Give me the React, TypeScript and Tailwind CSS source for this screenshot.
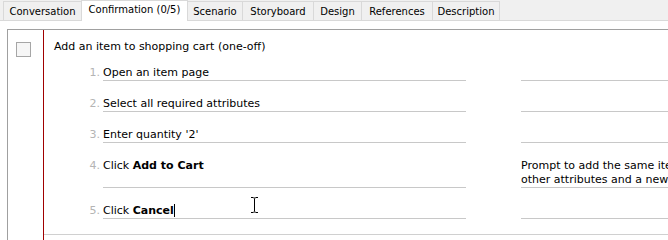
import clsx from "clsx";

const tabs = [
  { label: "Conversation", w: "w-[79px]" },
  { label: "Confirmation (0/5)", w: "w-[107px]", active: true },
  { label: "Scenario", w: "w-[56px]" },
  { label: "Storyboard", w: "w-[72px]" },
  { label: "Design", w: "w-[49px]" },
  { label: "References", w: "w-[72px]" },
  { label: "Description", w: "w-[68px]" },
];

type Step = {
  n: number;
  text: React.ReactNode;
  note?: React.ReactNode;
};

const steps: Step[] = [
  { n: 1, text: "Open an item page" },
  { n: 2, text: "Select all required attributes" },
  { n: 3, text: "Enter quantity '2'" },
  {
    n: 4,
    text: (
      <>
        Click <b>Add to Cart</b>
      </>
    ),
    note: (
      <>
        Prompt to add the same item with
        <br />
        other attributes and a new quantity
      </>
    ),
  },
  {
    n: 5,
    text: (
      <>
        Click <b>Cancel</b>
        <span className="inline-block w-px h-[13px] bg-black align-[-3px]" />
      </>
    ),
  },
];

const App = () => {
  return (
    <div
      className="relative w-[668px] h-[240px] overflow-hidden bg-white text-black text-[11px] leading-[14px]"
      style={{ fontFamily: '"DejaVu Sans", Verdana, sans-serif' }}
    >
      {/* tab strip */}
      <div className="flex items-end h-[21px] bg-[#f0f0f0] border-b border-[#d9d9d9] pl-[3px] text-[10px]">
        {tabs.map((t) => (
          <div
            key={t.label}
            className={clsx(
              "flex items-center justify-center border-l border-r border-t border-[#d9d9d9] -mr-px",
              t.w,
              t.active
                ? "relative z-10 h-[21px] -mb-px bg-white pb-[2px]"
                : "h-[19px] bg-[#f0f0f0] pt-[2px]"
            )}
          >
            {t.label}
          </div>
        ))}
      </div>

      {/* content */}
      <div className="pt-[8px] pl-[7px]">
        <div className="flex border-l border-t border-[#a0a0a0] h-[220px]">
          <div className="w-[35px] shrink-0 pl-[8px] pt-[12px]">
            <div className="w-[15px] h-[15px] border border-[#a6a6a6] bg-[#f6f6f6]" />
          </div>
          <div className="flex-1 border-l border-[#a00000]">
            <div className="border-b border-[#d0d0d0] pt-[10px] pb-[15px] pl-[10px]">
              <div>Add an item to shopping cart (one-off)</div>
              <div className="mt-[12px] flex flex-col gap-[16px]">
                {steps.map((s) => (
                  <div key={s.n} className="flex">
                    <div className="w-[46px] shrink-0 text-right text-[#b4b4b4]">
                      {s.n}.
                    </div>
                    <div className="ml-[3px] w-[363px] shrink-0 border-b border-[#c8c8c8] whitespace-nowrap">
                      {s.text}
                    </div>
                    <div className="ml-[55px] w-[320px] shrink-0 border-b border-[#c8c8c8] whitespace-nowrap">
                      {s.note ?? "\u00a0"}
                    </div>
                  </div>
                ))}
              </div>
            </div>
          </div>
        </div>
      </div>

      {/* mouse cursor (I-beam) */}
      <svg
        className="absolute left-[250px] top-[197px]"
        width="9"
        height="16"
        viewBox="0 0 9 16"
      >
        <path
          d="M1 0.5h2.5M5.5 0.5H8M4.5 1.5v13M1 15.5h2.5M5.5 15.5H8M3.5 1h2M3.5 15h2"
          stroke="#000"
          strokeWidth="1"
          fill="none"
        />
      </svg>
    </div>
  );
};

export default App;
